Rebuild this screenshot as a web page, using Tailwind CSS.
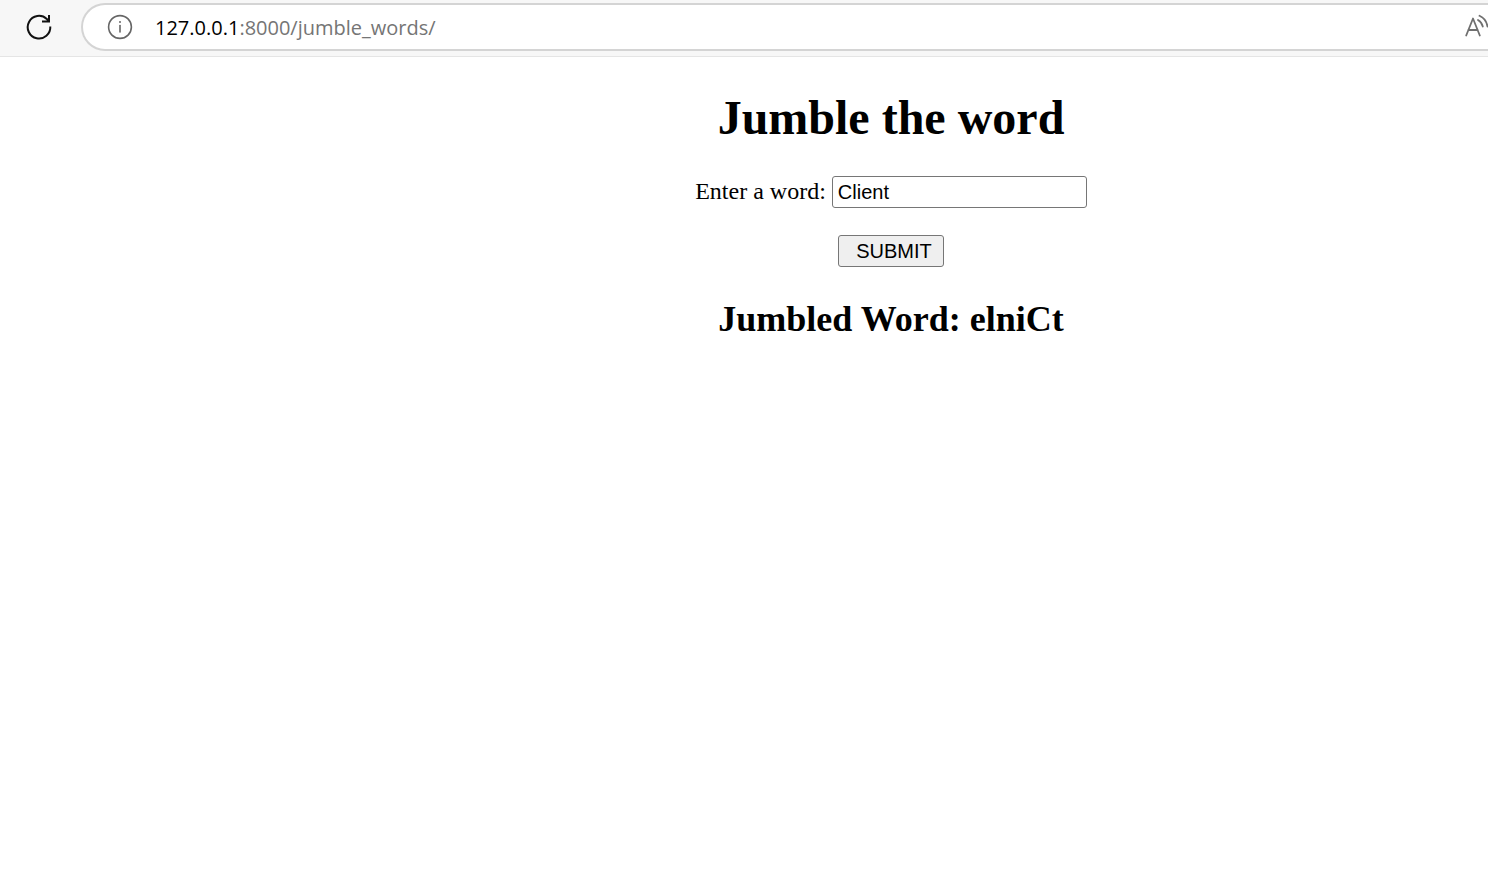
<!DOCTYPE html>
<html lang="en">
<head>
<meta charset="utf-8">
<title>Jumble the word</title>
<script src="https://cdn.jsdelivr.net/npm/@tailwindcss/browser@4"></script>
</head>
<body class="min-h-screen overflow-x-hidden bg-white text-black">
<header class="flex h-[57px] items-start border-b border-[#e5e5e5] bg-[#f7f7f7] pt-[3px]">
  <button type="button" aria-label="Refresh" class="ml-6 mt-2 h-8 w-8 shrink-0">
    <svg class="h-8 w-8" viewBox="0 0 32 32" fill="none" stroke="#111" stroke-width="2"><path d="M26.3 15.500A11.300 11.300 0 1 1 22.800 8L25 10M25 4v6.500h-7"/></svg>
  </button>
  <div class="ml-[25px] flex h-12 min-w-0 grow items-center rounded-l-full border-y-2 border-l-2 border-[#d4d4d4] bg-white pl-6">
    <button type="button" aria-label="View site information" class="h-7 w-7 shrink-0">
      <svg class="h-7 w-7" viewBox="0 0 28 28" fill="none" stroke="#666" stroke-width="1.6" stroke-linecap="round"><circle cx="13" cy="14" r="11.4"/><path d="M13 12.5v6.5"/><circle cx="13" cy="9" r="1" fill="#666" stroke="none"/></svg>
    </button>
    <a href="#" class="ml-5 grow pt-0.5 font-['Open_Sans',sans-serif] text-[20px] leading-7 text-[#757575]"><span class="text-black">127.0.0.1</span>:8000/jumble_words/</a>
    <button type="button" aria-label="Read aloud" class="h-7 w-6 shrink-0 overflow-hidden">
      <svg class="h-7 w-7" viewBox="0 0 28 28" fill="none" stroke="#707070" stroke-width="1.8" stroke-linecap="round" stroke-linejoin="round"><path d="M2.200 22.500 9 5.500l6.800 17M4.300 17h9.400M14 7a10 10 0 0 1 4.800 6.500M15.500 2.800a14 14 0 0 1 8 10.700"/></svg>
    </button>
  </div>
</header>
<main class="flex flex-col items-center pl-[294px] pt-[33px] font-['Liberation_Serif',serif]">
  <h1 class="text-[48px] leading-14 font-bold">Jumble the word</h1>
  <form class="mt-[30px] flex flex-col items-center" onsubmit="return false">
    <div class="flex items-start gap-1.5">
      <label for="word" class="text-2xl leading-[30px]">Enter a word:</label>
      <input id="word" type="text" value="Client" class="h-8 w-[255px] rounded-[3px] border border-[#767676] bg-white px-[5px] font-['Liberation_Sans',sans-serif] text-[20px]">
    </div>
    <button type="submit" class="mt-[27px] h-8 w-[106px] rounded-[3px] border border-[#767676] bg-[#efefef] pl-1.5 font-['Liberation_Sans',sans-serif] text-[20px]">SUBMIT</button>
  </form>
  <h2 class="mt-8 text-[36px] leading-10 font-bold">Jumbled Word: elniCt</h2>
</main>
</body>
</html>
